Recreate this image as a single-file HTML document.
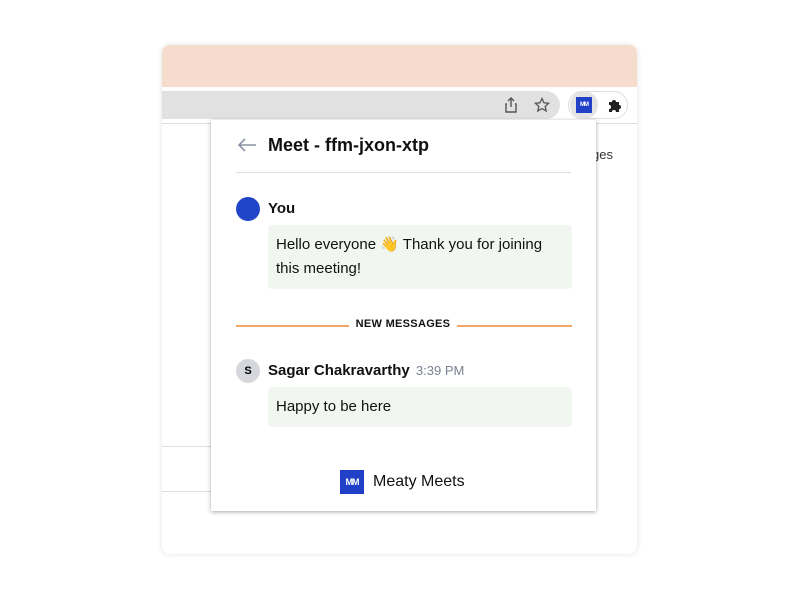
<!DOCTYPE html>
<html><head><style>
body{margin:0;width:800px;height:600px;background:#fff;font-family:"Liberation Sans",sans-serif;position:relative;overflow:hidden}
.win{position:absolute;left:162px;top:45px;width:475px;height:509px;border-radius:8px;background:#fff;box-shadow:0 0 6px rgba(0,0,0,.12);overflow:hidden}
.top{position:absolute;left:0;top:0;width:475px;height:42px;background:#f6dccd}
.addr{position:absolute;left:0;top:46px;width:398px;height:28px;background:#e1e1e1;border-radius:0 14px 14px 0}
.hl{position:absolute;left:0;top:78px;width:475px;height:1px;background:#ddd}
.pop{position:absolute;left:211px;top:120px;width:385px;height:391px;background:#fff;box-shadow:0 1px 4px rgba(0,0,0,.35)}
.abs{position:absolute}
.bubble{position:absolute;left:57px;width:304px;box-sizing:border-box;background:#f2f6f1;border-radius:4px;font-size:15px;color:#111;line-height:24px;padding:8px 8px 8px 8px}
.logo{background:#2040c8;color:#fff;font-size:9px;display:flex;align-items:center;justify-content:center;font-weight:bold;letter-spacing:-1px}
</style></head><body>
<div class="win">
<div class="top"></div>
<div class="addr"></div>
<svg class="abs" style="left:342px;top:52px" width="14" height="16" viewBox="0 0 14 16"><path d="M7 1v9M4 4l3-3 3 3M3 7H2v8h10V7h-1" fill="none" stroke="#555" stroke-width="1.4"/></svg>
<svg class="abs" style="left:372px;top:52px" width="16" height="16" viewBox="0 0 16 16"><path d="M8 1.5l2 4.3 4.6.5-3.4 3.1 1 4.6L8 11.6 3.8 14l1-4.6L1.4 6.3 6 5.8z" fill="none" stroke="#555" stroke-width="1.3"/></svg>
<div class="abs" style="left:406px;top:46px;width:60px;height:28px;border-radius:14px;border:1px solid #ddd;box-sizing:border-box"></div>
<div class="abs" style="left:408px;top:46px;width:28px;height:28px;border-radius:14px;background:#e3e3e3"></div>
<div class="abs logo" style="left:414px;top:52px;width:16px;height:16px;font-size:6px">MM</div>
<svg class="abs" style="left:445px;top:52px" width="16" height="16" viewBox="0 0 16 16"><path d="M2 5h3a2 2 0 1 1 4 0h3v3a2 2 0 1 1 0 4v3H9a2 2 0 1 0-4 0H2v-3a2 2 0 1 0 0-4z" fill="#222"/></svg>
<div class="hl"></div>
<div class="abs" style="left:0;top:401px;width:50px;height:1px;background:#ddd"></div>
<div class="abs" style="left:0;top:446px;width:50px;height:1px;background:#ddd"></div>
<div class="abs" style="left:430px;top:102px;font-size:13px;color:#333">ges</div>
</div>
<div class="pop">
<svg class="abs" style="left:26px;top:18px" width="20" height="14" viewBox="0 0 20 14"><path d="M19 7H2M8 1L2 7l6 6" fill="none" stroke="#8a94a6" stroke-width="1.6"/></svg>
<div class="abs" style="left:57px;top:15px;font-size:18px;font-weight:bold;color:#111">Meet - ffm-jxon-xtp</div>
<div class="abs" style="left:25px;top:52px;width:335px;height:1px;background:#ddd"></div>
<div class="abs" style="left:25px;top:77px;width:24px;height:24px;border-radius:50%;background:#2145c9"></div>
<div class="abs" style="left:57px;top:80px;font-size:15px;font-weight:bold;color:#111">You</div>
<div class="bubble" style="top:105px;height:64px;padding-right:20px">Hello everyone 👋 Thank you for joining this meeting!</div>
<div class="abs" style="left:25px;top:205px;width:113px;height:1.5px;background:#f0a868"></div>
<div class="abs" style="left:246px;top:205px;width:115px;height:1.5px;background:#f0a868"></div>
<div class="abs" style="left:138px;top:198px;width:108px;text-align:center;font-size:11px;font-weight:bold;letter-spacing:.3px;color:#111">NEW MESSAGES</div>
<div class="abs" style="left:25px;top:239px;width:24px;height:24px;border-radius:50%;background:#d5d7dc;font-size:11px;font-weight:bold;text-align:center;line-height:24px">S</div>
<div class="abs" style="left:57px;top:242px;font-size:15px;font-weight:bold;color:#111">Sagar Chakravarthy <span style="font-weight:normal;color:#7a8290;font-size:13px;margin-left:2px">3:39 PM</span></div>
<div class="bubble" style="top:267px;height:40px">Happy to be here</div>
<div class="abs logo" style="left:129px;top:350px;width:24px;height:24px">MM</div>
<div class="abs" style="left:162px;top:353px;font-size:16px;color:#111">Meaty Meets</div>
</div>
</body></html>
